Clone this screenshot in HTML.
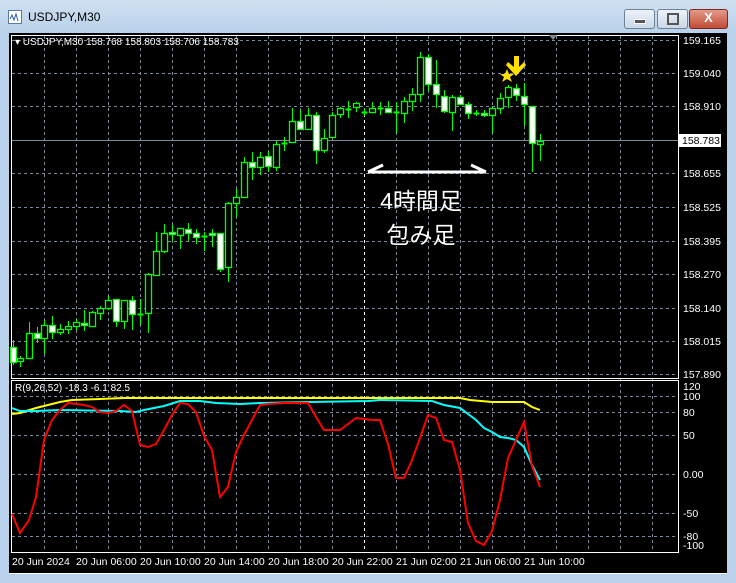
<!DOCTYPE html>
<html><head><meta charset="utf-8"><style>
*{margin:0;padding:0}
body{width:736px;height:583px;overflow:hidden;background:#b9d1ea;font-family:"Liberation Sans",sans-serif;position:relative}
#tb{position:absolute;left:0;top:0;width:736px;height:33px;background:linear-gradient(#d0e0f1,#b9d1ea)}
.t{position:absolute;left:28px;top:10px;font-size:12px;color:#000}
.btn{position:absolute;top:9px;height:18px;border:1px solid #6f8299;border-radius:3px;background:linear-gradient(#eef3f9,#c9d7e7)}
svg{position:absolute;left:0;top:0}
</style></head><body>
<div id="tb"></div>
<svg width="20" height="20" style="left:7px;top:9px"><rect x="1.5" y="1.5" width="13" height="13" fill="#fff" stroke="#5a7aa6"/><path d="M3 10 L5 6 L7 11 L9 5 L11 12" stroke="#2b5fb0" fill="none"/></svg>
<div class="t">USDJPY,M30</div>
<div class="btn" style="left:624px;width:29px"><div style="position:absolute;left:9px;top:9px;width:10px;height:3px;background:#555;border:1px solid #fff"></div></div>
<div class="btn" style="left:657px;width:29px"><div style="position:absolute;left:9px;top:3px;width:8px;height:8px;border:2px solid #555"></div></div>
<div class="btn" style="left:689px;width:37px;background:linear-gradient(#e49a8a,#c14b35);border-color:#7a2a20"><div style="position:absolute;left:0;width:37px;top:0;text-align:center;color:#fff;font-weight:bold;font-size:13px">X</div></div>
<svg width="736" height="583" id="c">
<rect x="9" y="33" width="718" height="540" fill="#000"/>
<g stroke="#7e8a99" stroke-dasharray="3,3" stroke-width="1" id="grid"></g>
<line x1="11" y1="140.5" x2="678" y2="140.5" stroke="#7e8a99"/>
<line x1="364.5" y1="36" x2="364.5" y2="552" stroke="#fff" stroke-dasharray="3,3"/>
<rect x="11.5" y="35.5" width="667" height="343" fill="none" stroke="#fff"/>
<rect x="11.5" y="380.5" width="667" height="172" fill="none" stroke="#fff"/>
<path d="M549 35 L557 35 L553 40Z" fill="#888"/>
<g id="cd"></g>
<g id="ind" fill="none" stroke-width="2"></g>
<g fill="#fff" font-size="10.5" font-family="Liberation Sans,sans-serif">
<text x="683" y="44">159.165</text><text x="683" y="77">159.040</text><text x="683" y="110">158.910</text>
<text x="683" y="177">158.655</text><text x="683" y="211">158.525</text><text x="683" y="245">158.395</text>
<text x="683" y="278">158.270</text><text x="683" y="312">158.140</text><text x="683" y="345">158.015</text><text x="683" y="378">157.890</text>
<text x="683" y="390">120</text><text x="683" y="400">100</text><text x="683" y="416">80</text><text x="683" y="439">50</text>
<text x="683" y="478">0.00</text><text x="683" y="517">-50</text><text x="683" y="540">-80</text><text x="683" y="549">-100</text>
<text x="15" y="45" font-size="10">▾ USDJPY,M30  158.768 158.803 158.706 158.783</text>
<text x="15" y="391" font-size="10">R(9,26,52) -18.3 -6.1 82.5</text>
<text x="12" y="565">20 Jun 2024</text><text x="76" y="565">20 Jun 06:00</text><text x="140" y="565">20 Jun 10:00</text>
<text x="204" y="565">20 Jun 14:00</text><text x="268" y="565">20 Jun 18:00</text><text x="332" y="565">20 Jun 22:00</text>
<text x="396" y="565">21 Jun 02:00</text><text x="460" y="565">21 Jun 06:00</text><text x="524" y="565">21 Jun 10:00</text>
</g>
<rect x="679" y="134" width="42" height="13" fill="#fff"/>
<text x="682" y="144" font-size="10.5" fill="#000" font-family="Liberation Sans,sans-serif">158.783</text>
<path d="M368 172 L486 172 M368 172 L383 165 M471 165 L486 172" stroke="#fff" stroke-width="3" fill="none"/>
<text x="421" y="209" fill="#fff" font-size="23" text-anchor="middle" font-family="Liberation Sans,Noto Sans CJK JP,sans-serif">4時間足</text>
<text x="421" y="243" fill="#fff" font-size="23" text-anchor="middle" font-family="Liberation Sans,Noto Sans CJK JP,sans-serif">包み足</text>
<path d="M507 69 L509 74 L514 74 L510 77 L512 82 L507 79 L502 82 L504 77 L500 74 L505 74Z" fill="#ffe000"/>
<path d="M514 56 L519 56 L519 67 L524 62 L526 65 L516 76 L506 65 L508 62 L514 67Z" fill="#ffe000"/>
<line x1="9" y1="573.5" x2="727" y2="573.5" stroke="#fff"/>
</svg>
<script>
var g=document.getElementById('grid'),s='';
for(var x=44;x<=652;x+=32){if(x!=364)s+='<line x1="'+(x+.5)+'" y1="36" x2="'+(x+.5)+'" y2="552"/>';}
[40,73,106,173,207,241,274,308,341,374].forEach(function(y){s+='<line x1="12" y1="'+(y+.5)+'" x2="678" y2="'+(y+.5)+'"/>'});
[396,412,435,474,513,536].forEach(function(y){s+='<line x1="12" y1="'+(y+.5)+'" x2="678" y2="'+(y+.5)+'"/>'});
g.innerHTML=s;
var C=[[13,340,347,362,365,1],[20,356,358,361,367,0],[28.5,322,333,358,358,0],[36.5,327,333,338,343,1],[44,320,325,338,354,0],[52,316,325,332,339,1],[60,324,329,332,335,0],[68,321,326,329,334,0],[76,319,322,326,330,0],[84,310,323,325,331,1],[92,311,312,326,327,0],[100,306,308,313,320,0],[108,296,300,308,310,0],[116,299,299,321,327,1],[124,300,300,321,329,0],[132,296,300,314,330,1],[140,299,314,314,325,2],[148,273,274,313,333,0],[156,232,251,275,275,0],[164,224,233,251,253,0],[172,225,232,234,241,1],[180,228,228,235,249,0],[188,223,229,233,241,1],[196,229,233,237,244,1],[204,232,236,236,251,2],[212,229,233,235,247,1],[220,233,233,269,272,1],[228,202,203,267,282,0],[236,189,197,203,217,0],[244,157,162,197,197,0],[252,152,162,167,180,1],[260,152,157,167,175,0],[268,151,156,166,172,1],[276,141,144,167,171,0],[284,137,143,143,151,2],[292,108,121,142,142,0],[300,110,121,129,130,1],[308,108,115,129,130,0],[316,112,115,150,164,1],[324,129,138,150,153,0],[332,112,115,137,137,0],[340,107,108,114,118,0],[348,101,109,109,118,2],[356,102,103,107,112,0],[364,108,112,112,116,2],[372,102,108,112,113,0],[380,102,108,108,115,2],[388,101,108,112,113,1],[396,102,112,112,133,2],[404,97,101,113,123,0],[412,88,94,101,111,0],[420,52,57,94,102,0],[428,54,57,84,91,1],[436,60,84,94,108,1],[444,90,96,111,113,1],[452,95,97,112,131,0],[460,95,97,104,105,1],[468,102,104,113,119,1],[476,110,113,113,116,2],[484,110,113,115,117,1],[492,107,108,115,133,0],[500,93,98,108,114,0],[508,85,87,97,108,0],[516,84,88,95,101,1],[524,83,96,104,126,1],[532,106,106,143,172,1],[540,134,141,144,161,0]];
var h='';C.forEach(function(c){var x=Math.round(c[0])+.5;h+='<line x1="'+x+'" y1="'+c[1]+'" x2="'+x+'" y2="'+c[4]+'" stroke="#00ff00"/>';
if(c[5]==2)h+='<line x1="'+(x-3)+'" y1="'+(c[2]+.5)+'" x2="'+(x+3)+'" y2="'+(c[2]+.5)+'" stroke="#00ff00" stroke-width="2"/>';
else h+='<rect x="'+(x-3)+'" y="'+(c[2]+.5)+'" width="6" height="'+Math.max(2,c[3]-c[2])+'" fill="'+(c[5]?'#fff':'#000')+'" stroke="#00ff00" stroke-width="1.3"/>';});
document.getElementById('cd').innerHTML=h;
function pl(p,col){return '<polyline stroke="'+col+'" points="'+p.map(function(a){return a.join(',')}).join(' ')+'"/>';}
var Y=[[12,414],[20,413],[36,408],[52,404],[60,402],[72,400],[100,399],[124,398],[460,398],[470,400],[492,402],[524,402],[532,407],[540,410]];
var Cy=[[12,408],[20,411],[36,411],[60,410],[120,411],[136,412],[144,410],[164,406],[180,401],[200,401],[216,403],[240,404],[260,403],[310,402],[368,401],[380,400],[432,401],[444,405],[460,408],[476,420],[484,428],[492,432],[500,437],[508,438],[516,440],[524,447],[532,465],[540,480]];
var R=[[12,514],[20,533],[29,520],[36,497],[44,440],[52,420],[60,410],[68,403],[76,404],[84,405],[92,407],[100,412],[108,413],[116,411],[124,405],[132,411],[140,445],[148,447],[156,444],[164,430],[172,415],[180,403],[188,404],[196,412],[204,436],[212,450],[220,497],[228,487],[236,452],[244,435],[252,420],[260,405],[268,404],[284,403],[308,403],[316,417],[324,430],[340,430],[348,424],[356,418],[372,420],[380,420],[388,444],[396,478],[404,478],[412,460],[420,438],[428,415],[436,418],[444,440],[452,442],[460,470],[468,523],[476,541],[484,545],[492,531],[500,500],[508,458],[516,440],[524,422],[532,466],[540,487]];
document.getElementById('ind').innerHTML=pl(Y,'#ffff00')+pl(Cy,'#00ffff')+pl(R,'#ff0000');
</script>
</body></html>
